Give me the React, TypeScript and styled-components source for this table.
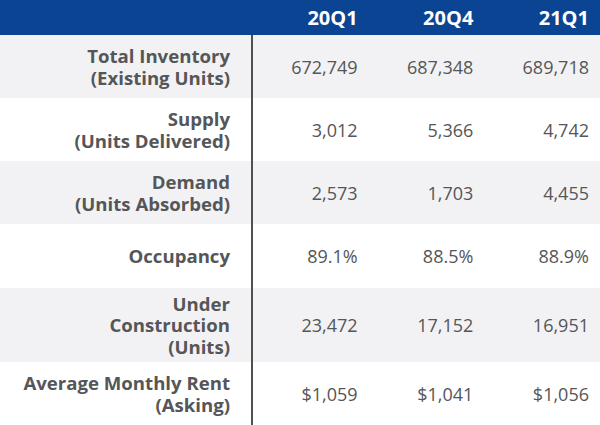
import React from 'react';
import styled, { createGlobalStyle } from 'styled-components';

const GlobalStyle = createGlobalStyle`
  html, body {
    margin: 0;
    padding: 0;
    background: #ffffff;
  }
  body {
    font-family: 'Open Sans', 'Liberation Sans', sans-serif;
  }
`;

const Table = styled.div`
  width: 600px;
  display: grid;
  grid-template-columns: 251px 2px repeat(3, 1fr);
  color: #555658;
`;

const HeaderCell = styled.div`
  height: 35px;
  background: #0b4492;
  color: #ffffff;
  font-weight: 700;
  font-size: 20px;
  display: flex;
  align-items: center;
  justify-content: flex-end;
  padding-right: 11px;
`;

const HeaderBlank = styled(HeaderCell)`
  padding-right: 0;
`;

const Row = styled.div<{ $shade: boolean; $h: number }>`
  display: contents;
  & > * {
    height: ${(p) => p.$h}px;
    background: ${(p) => (p.$shade ? '#f2f2f4' : '#ffffff')};
  }
`;

const Label = styled.div`
  display: flex;
  flex-direction: column;
  align-items: flex-end;
  justify-content: center;
  padding-right: 21px;
  font-weight: 700;
  font-size: 18.6px;
  line-height: 21.5px;
  text-align: right;
  white-space: nowrap;
`;

const Divider = styled.div`
  && {
    background: #505050;
  }
`;

const Value = styled.div`
  display: flex;
  align-items: center;
  justify-content: flex-end;
  padding-right: 11px;
  font-size: 18px;
`;

const rows = [
  { label: ['Total Inventory', '(Existing Units)'], values: ['672,749', '687,348', '689,718'], h: 63 },
  { label: ['Supply', '(Units Delivered)'], values: ['3,012', '5,366', '4,742'], h: 63 },
  { label: ['Demand', '(Units Absorbed)'], values: ['2,573', '1,703', '4,455'], h: 63 },
  { label: ['Occupancy'], values: ['89.1%', '88.5%', '88.9%'], h: 64 },
  { label: ['Under', 'Construction', '(Units)'], values: ['23,472', '17,152', '16,951'], h: 74 },
  { label: ['Average Monthly Rent', '(Asking)'], values: ['$1,059', '$1,041', '$1,056'], h: 63 },
];

const App: React.FC = () => (
  <>
    <GlobalStyle />
    <Table>
      <HeaderBlank />
      <HeaderBlank />
      <HeaderCell>20Q1</HeaderCell>
      <HeaderCell>20Q4</HeaderCell>
      <HeaderCell>21Q1</HeaderCell>
      {rows.map((r, i) => (
        <Row key={i} $shade={i % 2 === 0} $h={r.h}>
          <Label>
            {r.label.map((l) => (
              <span key={l}>{l}</span>
            ))}
          </Label>
          <Divider />
          {r.values.map((v, j) => (
            <Value key={j}>{v}</Value>
          ))}
        </Row>
      ))}
    </Table>
  </>
);

export default App;
